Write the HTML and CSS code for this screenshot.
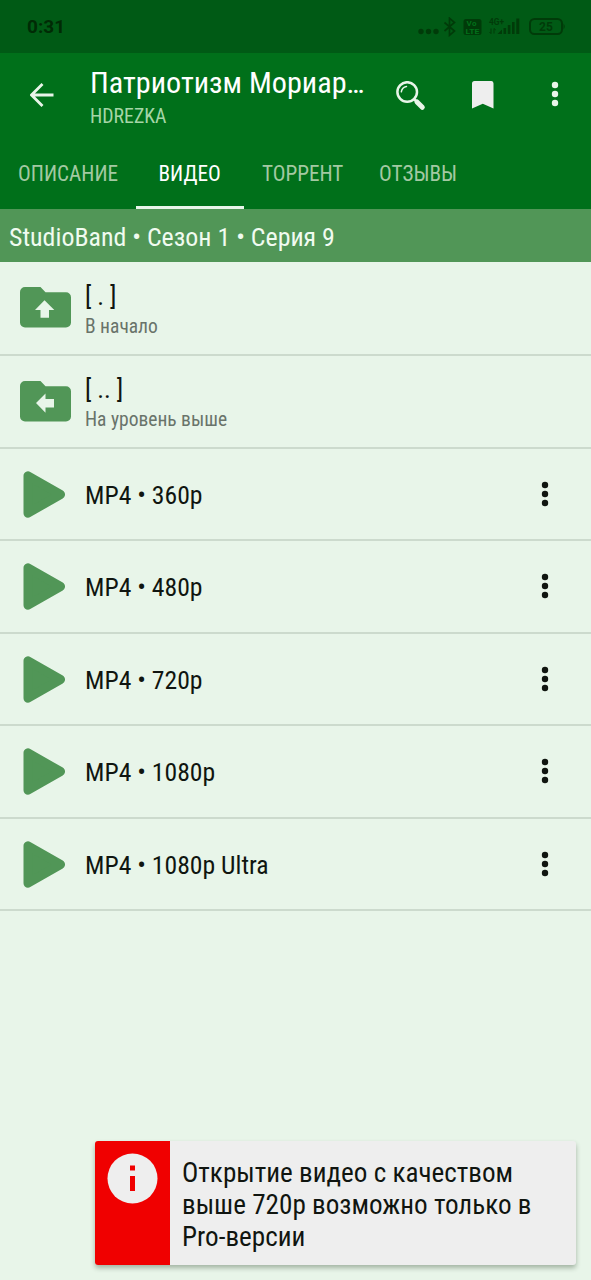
FILE: index.html
```html
<!DOCTYPE html>
<html lang="ru">
<head>
<meta charset="utf-8">
<title>HDREZKA</title>
<link rel="stylesheet" href="styles.css">
</head>
<body>
<svg class="defs" width="0" height="0">
  <symbol id="play" viewBox="0 0 44 48"><path d="M5 5.800v37.400L37.500 24.500z" stroke="#519657" stroke-width="9" stroke-linejoin="round" fill="#519657"/></symbol>
  <symbol id="dots" viewBox="0 0 8 26"><circle cx="4" cy="4" r="3.200"/><circle cx="4" cy="13" r="3.200"/><circle cx="4" cy="22" r="3.200"/></symbol>
  <symbol id="folder" viewBox="0 0 51 41"><path d="M5 0h15.500l5 5.200H46a5 5 0 0 1 5 5V35.500a5 5 0 0 1-5 5H5a5 5 0 0 1-5-5V5a5 5 0 0 1 5-5z"/></symbol>
</svg>
<div class="status">
  <span class="clock">0:31</span>
  <svg class="status-icons" width="150" height="20" viewBox="0 0 150 20">
    <circle cx="3" cy="14.500" r="2.700"/><circle cx="10.500" cy="14.500" r="2.700"/><circle cx="18" cy="14.500" r="2.700"/>
    <path d="M26.500 5.500l10 8.500-5 4.300V1.200l5 4.300-10 8.500" fill="none" stroke="#003b09" stroke-width="1.700"/>
    <rect x="45.500" y="2" width="18" height="16" rx="2.500"/>
    <text class="volte" x="48.500" y="9" textLength="10">Vo</text><text class="volte" x="47.500" y="16.500" textLength="14" lengthAdjust="spacingAndGlyphs">LTE</text>
    <text class="net" x="71" y="7.500" textLength="15" lengthAdjust="spacingAndGlyphs">4G+</text>
    <path d="M73 16.500V11.500M71.500 15l1.500 1.700M76 16.500V11.500l1.800 1.500" fill="none" stroke="#003b09" stroke-width="1"/>
    <path d="M79.500 17l4.500-4.500V17zM85.500 11h2.600v6h-2.600zM89.800 8h2.600v9h-2.600zM94 5h2.600v12H94zM98.300 1.500h3V17h-3z"/>
    <rect x="112" y="2" width="32" height="15" rx="4.500" fill="none" stroke="#003b09" stroke-width="2"/>
    <path d="M145.500 6.500q2.500 3 0 6z"/>
    <text class="charge" x="121" y="14" textLength="14">25</text>
  </svg>
</div>
<header class="bar">
  <svg class="back" width="24" height="24" viewBox="0 0 24 24"><path d="M23.500 12H1.500M12.500 1L1.500 12l11 11" fill="none" stroke="#e8f5e9" stroke-width="2.800"/></svg>
  <div class="titles">
    <h1 class="title">Патриотизм Мориар…</h1>
    <div class="source">HDREZKA</div>
  </div>
  <div class="actions">
    <svg width="30" height="30" viewBox="0 0 30 30" fill="none" stroke="#e8f5e9" stroke-linecap="round"><circle cx="11.200" cy="11" r="9.800" stroke-width="2.500"/><path d="M5.300 10.800a6.500 6.500 0 0 1 5.200-5.400" stroke-width="1.500"/><path d="M18.500 18.500l2 2" stroke-width="2.500"/><path d="M21 21l5.300 5.300" stroke-width="5"/></svg>
    <svg width="22" height="28" viewBox="0 0 22 28"><path d="M2.500 0h17A2.500 2.500 0 0 1 21.500 2.500V27.500l-10.700-4.700L0 27.500V2.500A2.500 2.500 0 0 1 2.500 0z" fill="#eee"/></svg>
    <svg width="8" height="26" fill="#e8f5e9"><use href="#dots"/></svg>
  </div>
</header>
<nav class="tabs">
  <span class="tab">ОПИСАНИЕ</span>
  <span class="tab active">ВИДЕО</span>
  <span class="tab">ТОРРЕНТ</span>
  <span class="tab">ОТЗЫВЫ</span>
</nav>
<div class="path">StudioBand • Сезон 1 • Серия 9</div>
<main class="list">
  <div class="row folder-row first"><svg class="folder" width="51" height="41"><use href="#folder"/><path d="M24.500 13.200l9.800 9.800h-5.300v7.700h-8.500V23h-5.500z" fill="#e8f5e9"/></svg><div class="label"><div class="name">[ . ]</div><div class="hint">В начало</div></div></div>
  <div class="row folder-row"><svg class="folder" width="51" height="41"><use href="#folder"/><path d="M16 22l9.500-9.500v5.500H34v8.500h-8.500v5.300z" fill="#e8f5e9"/></svg><div class="label"><div class="name">[ .. ]</div><div class="hint">На уровень выше</div></div></div>
  <div class="row"><svg class="play" width="44" height="48"><use href="#play"/></svg><span class="name label">MP4 • 360p</span><svg class="more" width="8" height="26"><use href="#dots"/></svg></div>
  <div class="row"><svg class="play" width="44" height="48"><use href="#play"/></svg><span class="name label">MP4 • 480p</span><svg class="more" width="8" height="26"><use href="#dots"/></svg></div>
  <div class="row"><svg class="play" width="44" height="48"><use href="#play"/></svg><span class="name label">MP4 • 720p</span><svg class="more" width="8" height="26"><use href="#dots"/></svg></div>
  <div class="row"><svg class="play" width="44" height="48"><use href="#play"/></svg><span class="name label">MP4 • 1080p</span><svg class="more" width="8" height="26"><use href="#dots"/></svg></div>
  <div class="row"><svg class="play" width="44" height="48"><use href="#play"/></svg><span class="name label">MP4 • 1080p Ultra</span><svg class="more" width="8" height="26"><use href="#dots"/></svg></div>
</main>
<aside class="toast">
  <div class="toast-icon"><svg width="51" height="51"><circle cx="25.500" cy="25.500" r="25" fill="#eee"/><path d="M23 12.500h5v5h-5zM23 23h5v15h-5z" fill="#f00000"/></svg></div>
  <div class="toast-text">Открытие видео с качеством<br>выше 720p возможно только в<br>Pro-версии</div>
</aside>
</body>
</html>
```
FILE: styles.css
```css
* { box-sizing: border-box; }
body {
  margin: 0;
  width: 591px;
  height: 1280px;
  overflow: hidden;
  position: relative;
  background: #e8f5e9;
  color: #101510;
  font-family: "Roboto Condensed", Roboto, sans-serif;
  font-stretch: 75%;
  white-space: nowrap;
}
svg { display: block; flex: none; }
.defs { position: absolute; }
.status {
  height: 53px;
  padding: 0 23px 0 27px;
  display: flex;
  align-items: center;
  justify-content: space-between;
  background: #005a15;
  color: #002b05;
}
.clock { font: bold 19px Roboto, sans-serif; }
.status-icons { fill: #003b09; }
.volte { font: bold 8px Roboto, sans-serif; fill: #00701a; }
.net { font: bold 9px Roboto, sans-serif; }
.charge { font: bold 12px Roboto, sans-serif; }
.bar {
  height: 85px;
  display: flex;
  background: #00701a;
  color: #fff;
}
.back { margin: 30px 0 0 30px; }
.titles { width: 306px; padding: 12px 0 0 36px; }
.title { margin: 0; font-size: 30.2px; font-weight: 400; line-height: 36px; }
.source { font-size: 19.8px; line-height: 24px; margin-top: 4px; color: #a5d6a7; }
.actions { display: flex; align-items: flex-start; padding: 28px 0 0 36px; }
.actions svg + svg { margin-left: 46px; }
.actions svg:last-child { margin-left: 57px; }
.tabs { height: 71px; display: flex; background: #00701a; font-size: 21.2px; color: #a3c9a2; }
.tab { height: 71px; padding: 21px 0 0; line-height: 30px; }
.tab:nth-child(1) { width: 136px; padding-left: 18px; }
.tab:nth-child(2) { width: 108px; padding-left: 22.5px; }
.tab:nth-child(3) { width: 117px; padding-left: 18px; }
.tab:nth-child(4) { padding-left: 18px; }
.tabs .active { color: #fff; border-bottom: 3px solid #e8f5e9; }
.path { height: 53px; padding-left: 9px; background: #519657; color: #f0fbf0; font-size: 25.9px; line-height: 56px; }
.row { height: 92.5px; border-bottom: 2px solid #ccdacd; display: flex; align-items: center; }
.folder-row { height: 93px; }
.first { height: 93.5px; }
.folder { fill: #519657; margin-left: 20px; }
.folder-row .label { margin-left: 14px; padding-top: 3px; }
.play { margin-left: 23px; }
.play + .label { margin-left: 18px; padding-top: 2px; }
.label { flex: 1; }
.name { font-size: 25.7px; line-height: 32px; }
.hint { font-size: 19.5px; line-height: 24px; margin-top: 3px; color: #69736a; }
.more { margin-right: 42px; fill: #101510; }
.toast {
  position: absolute;
  left: 95px;
  top: 1141px;
  width: 481px;
  height: 124px;
  display: flex;
  border-radius: 3px;
  overflow: hidden;
  background: #eee;
  box-shadow: 0 3px 5px rgba(0, 30, 0, .3);
}
.toast-icon { width: 75px; padding: 12px 0 0 12px; background: #f00000; }
.toast-text { padding: 16px 0 0 12px; font-size: 27.15px; line-height: 32px; }
```
